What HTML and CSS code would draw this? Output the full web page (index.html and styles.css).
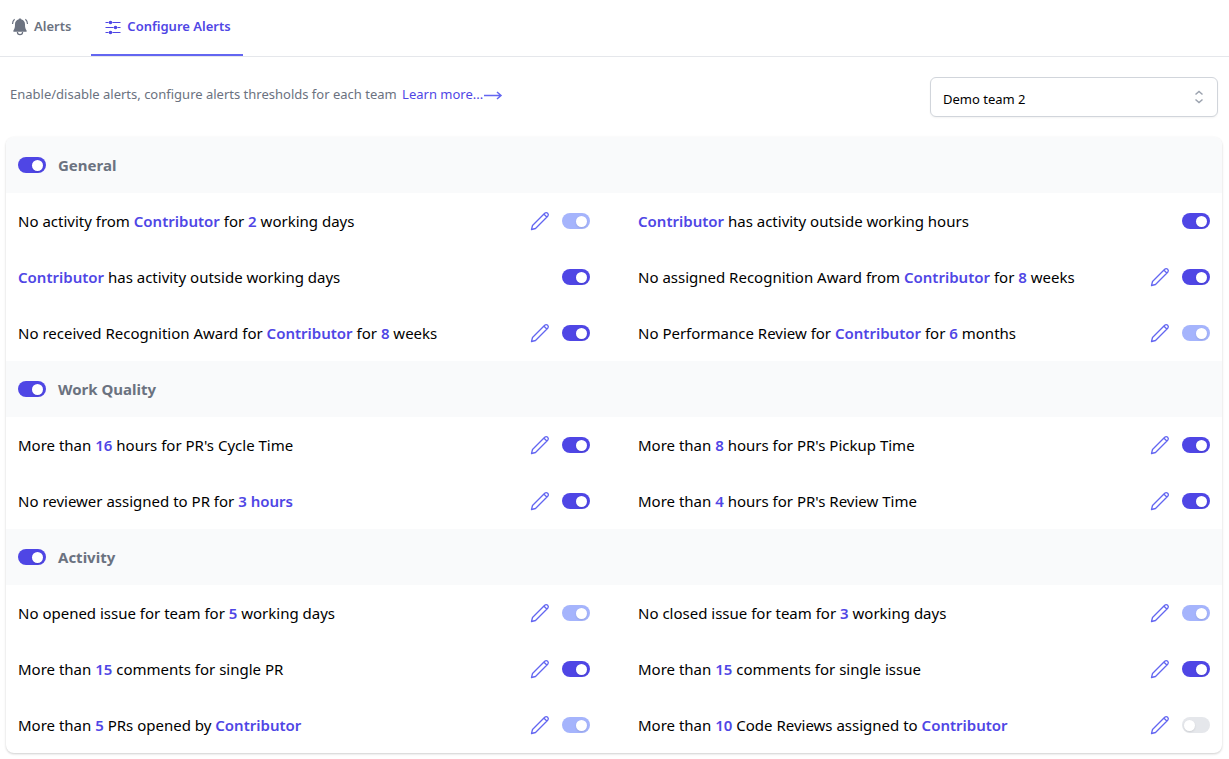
FILE: index.html
```html
<!DOCTYPE html>
<html lang="en">
<head>
    <meta charset="UTF-8">
    <meta name="viewport" content="width=device-width, initial-scale=1.0">
    <title>Configure Alerts</title>
    <link rel="stylesheet" href="styles.css">
</head>
<body>
    <svg class="sprite" aria-hidden="true">
        <symbol id="pencil" viewBox="0 0 20 20">
            <path d="M1.500 18.500L2.500 14.500L14.700 2.300Q16.200 1 17.700 2.300Q19 3.800 17.700 5.300L5.500 17.500ZM14 3.200L16.800 6"/>
        </symbol>
    </svg>

    <nav class="tabs">
        <a href="#alerts" class="tab">
            <svg class="tab-icon" viewBox="0 0 20 20" aria-hidden="true">
                <path fill="currentColor" d="M10 2.500c.9 0 1.300.4 1.400 1 2.300.5 3.600 2.300 3.600 4.800 0 3.500.4 4.700 1.600 6.200v1.300H3.400v-1.300C4.600 13 5 11.800 5 8.300c0-2.500 1.300-4.300 3.600-4.800.1-.6.5-1 1.400-1z"/>
                <path fill="none" stroke="currentColor" stroke-width="1.200" d="M7.400 16a2.600 2.600 0 0 0 5.200 0M4.600 3.200Q2.600 4.900 2.500 8M15.400 3.200Q17.400 4.900 17.500 8"/>
            </svg>
            Alerts
        </a>
        <a href="#configure" class="tab active">
            <svg class="tab-icon" viewBox="0 0 20 20" aria-hidden="true">
                <path fill="none" stroke="currentColor" stroke-width="1.200" d="M2.500 6.500h3M9.500 6.500h8M2.500 11.500h8M14.500 11.500h3M2.500 16.500h3M9.500 16.500h8"/>
                <g fill="currentColor">
                    <circle cx="7.500" cy="6.500" r="1.800"/>
                    <circle cx="12.500" cy="11.500" r="1.800"/>
                    <circle cx="7.500" cy="16.500" r="1.800"/>
                </g>
            </svg>
            Configure Alerts
        </a>
    </nav>

    <main>
        <div class="toolbar">
            <p class="hint">
                Enable/disable alerts, configure alerts thresholds for each team
                <a href="#learn-more" class="learn-more">Learn more...<svg class="arrow" viewBox="0 0 20 12" aria-hidden="true"><path d="M1 5.500h17M14 2l4 3.500-4 3.500"/></svg></a>
            </p>
            <div class="team-select">
                <select aria-label="Team">
                    <option>Demo team 2</option>
                </select>
                <svg class="select-icon" viewBox="0 0 20 20" aria-hidden="true"><path d="M6.500 7.500L10 4.500l3.500 3M6.500 12.500L10 15.500l3.500-3"/></svg>
            </div>
        </div>

        <div class="card">
            <section>
                <h2 class="group-title">
                    <input type="checkbox" class="switch" id="general" checked>
                    <label for="general">General</label>
                </h2>
                <div class="alerts">
                    <div class="alert">
                        <label for="g1">No activity from <b>Contributor</b> for <b>2</b> working days</label>
                        <button type="button" class="edit" aria-label="Edit"><svg><use href="#pencil"/></svg></button>
                        <input type="checkbox" class="switch muted" id="g1" checked>
                    </div>
                    <div class="alert">
                        <label for="g2"><b>Contributor</b> has activity outside working hours</label>
                        <input type="checkbox" class="switch" id="g2" checked>
                    </div>
                    <div class="alert">
                        <label for="g3"><b>Contributor</b> has activity outside working days</label>
                        <input type="checkbox" class="switch" id="g3" checked>
                    </div>
                    <div class="alert">
                        <label for="g4">No assigned Recognition Award from <b>Contributor</b> for <b>8</b> weeks</label>
                        <button type="button" class="edit" aria-label="Edit"><svg><use href="#pencil"/></svg></button>
                        <input type="checkbox" class="switch" id="g4" checked>
                    </div>
                    <div class="alert">
                        <label for="g5">No received Recognition Award for <b>Contributor</b> for <b>8</b> weeks</label>
                        <button type="button" class="edit" aria-label="Edit"><svg><use href="#pencil"/></svg></button>
                        <input type="checkbox" class="switch" id="g5" checked>
                    </div>
                    <div class="alert">
                        <label for="g6">No Performance Review for <b>Contributor</b> for <b>6</b> months</label>
                        <button type="button" class="edit" aria-label="Edit"><svg><use href="#pencil"/></svg></button>
                        <input type="checkbox" class="switch muted" id="g6" checked>
                    </div>
                </div>
            </section>

            <section>
                <h2 class="group-title">
                    <input type="checkbox" class="switch" id="quality" checked>
                    <label for="quality">Work Quality</label>
                </h2>
                <div class="alerts">
                    <div class="alert">
                        <label for="q1">More than <b>16</b> hours for PR's Cycle Time</label>
                        <button type="button" class="edit" aria-label="Edit"><svg><use href="#pencil"/></svg></button>
                        <input type="checkbox" class="switch" id="q1" checked>
                    </div>
                    <div class="alert">
                        <label for="q2">More than <b>8</b> hours for PR's Pickup Time</label>
                        <button type="button" class="edit" aria-label="Edit"><svg><use href="#pencil"/></svg></button>
                        <input type="checkbox" class="switch" id="q2" checked>
                    </div>
                    <div class="alert">
                        <label for="q3">No reviewer assigned to PR for <b>3 hours</b></label>
                        <button type="button" class="edit" aria-label="Edit"><svg><use href="#pencil"/></svg></button>
                        <input type="checkbox" class="switch" id="q3" checked>
                    </div>
                    <div class="alert">
                        <label for="q4">More than <b>4</b> hours for PR's Review Time</label>
                        <button type="button" class="edit" aria-label="Edit"><svg><use href="#pencil"/></svg></button>
                        <input type="checkbox" class="switch" id="q4" checked>
                    </div>
                </div>
            </section>

            <section>
                <h2 class="group-title">
                    <input type="checkbox" class="switch" id="activity" checked>
                    <label for="activity">Activity</label>
                </h2>
                <div class="alerts">
                    <div class="alert">
                        <label for="a1">No opened issue for team for <b>5</b> working days</label>
                        <button type="button" class="edit" aria-label="Edit"><svg><use href="#pencil"/></svg></button>
                        <input type="checkbox" class="switch muted" id="a1" checked>
                    </div>
                    <div class="alert">
                        <label for="a2">No closed issue for team for <b>3</b> working days</label>
                        <button type="button" class="edit" aria-label="Edit"><svg><use href="#pencil"/></svg></button>
                        <input type="checkbox" class="switch muted" id="a2" checked>
                    </div>
                    <div class="alert">
                        <label for="a3">More than <b>15</b> comments for single PR</label>
                        <button type="button" class="edit" aria-label="Edit"><svg><use href="#pencil"/></svg></button>
                        <input type="checkbox" class="switch" id="a3" checked>
                    </div>
                    <div class="alert">
                        <label for="a4">More than <b>15</b> comments for single issue</label>
                        <button type="button" class="edit" aria-label="Edit"><svg><use href="#pencil"/></svg></button>
                        <input type="checkbox" class="switch" id="a4" checked>
                    </div>
                    <div class="alert">
                        <label for="a5">More than <b>5</b> PRs opened by <b>Contributor</b></label>
                        <button type="button" class="edit" aria-label="Edit"><svg><use href="#pencil"/></svg></button>
                        <input type="checkbox" class="switch muted" id="a5" checked>
                    </div>
                    <div class="alert">
                        <label for="a6">More than <b>10</b> Code Reviews assigned to <b>Contributor</b></label>
                        <button type="button" class="edit" aria-label="Edit"><svg><use href="#pencil"/></svg></button>
                        <input type="checkbox" class="switch" id="a6">
                    </div>
                </div>
            </section>
        </div>
    </main>
</body>
</html>
```
FILE: styles.css
```css
* {
    box-sizing: border-box;
}
body {
    margin: 0;
    background: #fff;
    color: #000;
    font-family: 'Segoe UI', 'Noto Sans', 'Open Sans', sans-serif;
    font-size: 15px;
    line-height: 24px;
}
.sprite {
    display: none;
}
.tabs {
    display: flex;
    gap: 20px;
    height: 57px;
    padding-left: 10px;
    border-bottom: 1px solid #e5e7eb;
}
.tab {
    display: flex;
    align-items: center;
    gap: 4px;
    padding-bottom: 2px;
    border-bottom: 2px solid transparent;
    color: #6b7280;
    font-size: 13px;
    font-weight: 600;
    text-decoration: none;
}
.tab.active {
    padding-left: 12px;
    padding-right: 12px;
    border-color: #6366f1;
    color: #4f46e5;
}
.tab-icon {
    width: 20px;
    height: 20px;
}
main {
    padding: 20px 7px 6px 6px;
}
.toolbar {
    display: flex;
    justify-content: space-between;
    padding: 0 4px;
    margin-bottom: 20px;
}
.hint {
    margin: 5px 0 0;
    color: #6b7280;
    font-size: 13px;
}
.learn-more {
    margin-left: 2px;
    color: #4f46e5;
    text-decoration: none;
}
.arrow {
    width: 20px;
    height: 12px;
    vertical-align: middle;
    fill: none;
    stroke: #6366f1;
    stroke-width: 1.5;
}
.team-select {
    position: relative;
    width: 288px;
}
.team-select select {
    display: block;
    width: 100%;
    height: 40px;
    padding: 4px 36px 0 12px;
    border: 1px solid #d1d5db;
    border-radius: 6px;
    background: #fff;
    box-shadow: 0 1px 2px rgba(0, 0, 0, 0.05);
    color: #000;
    font-family: inherit;
    font-size: 13px;
    appearance: none;
}
.select-icon {
    position: absolute;
    top: 10px;
    right: 9px;
    width: 20px;
    height: 20px;
    fill: none;
    stroke: #9ca3af;
    stroke-width: 1.5;
    pointer-events: none;
}
.card {
    overflow: hidden;
    border-radius: 8px;
    background: #fff;
    box-shadow: 0 1px 3px rgba(0, 0, 0, 0.1), 0 1px 2px rgba(0, 0, 0, 0.1);
}
.group-title {
    display: flex;
    align-items: center;
    gap: 12px;
    height: 56px;
    margin: 0;
    padding: 0 12px;
    background: #f9fafb;
    color: #6b7280;
    font-size: 15px;
    font-weight: 700;
}
.alerts {
    display: grid;
    grid-template-columns: 1fr 1fr;
    column-gap: 48px;
    padding: 0 12px;
}
.alert {
    display: flex;
    align-items: center;
    gap: 12px;
    height: 56px;
}
.alert label {
    flex: 1;
}
.alert b {
    color: #4f46e5;
    font-weight: 600;
}
.edit {
    width: 20px;
    height: 20px;
    padding: 0;
    border: none;
    background: none;
    cursor: pointer;
}
.edit svg {
    display: block;
    width: 20px;
    height: 20px;
    fill: none;
    stroke: #6366f1;
    stroke-width: 1.3;
    stroke-linejoin: round;
}
.switch {
    display: flex;
    align-items: center;
    width: 28px;
    height: 16px;
    margin: 0;
    padding: 1px 3px 0 2px;
    border-radius: 8px;
    background: #e5e7eb;
    cursor: pointer;
    appearance: none;
}
.switch::before {
    content: "";
    width: 11px;
    height: 11px;
    border-radius: 50%;
    background: #fff;
    box-shadow: 0 1px 2px rgba(0, 0, 0, 0.1);
}
.switch:checked {
    justify-content: flex-end;
    background: #4f46e5;
}
.switch.muted:checked {
    background: #a5b4fc;
}
```
